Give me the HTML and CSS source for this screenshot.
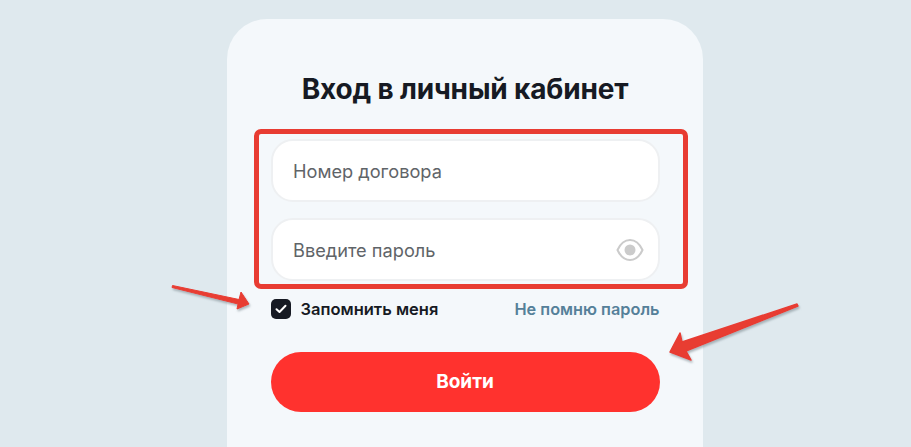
FILE: index.html
```html
<!DOCTYPE html>
<html lang="ru">
<head>
<meta charset="utf-8">
<title>Вход в личный кабинет</title>
<link rel="stylesheet" href="styles.css">
</head>
<body>
<main class="card">
  <h1 class="title">Вход в личный кабинет</h1>
  <div class="fields">
    <div class="field"><span class="placeholder">Номер договора</span></div>
    <div class="field"><span class="placeholder">Введите пароль</span>
      <svg class="eye" width="28" height="24" viewBox="0 0 28 24"><path d="M1.500 12C4.500 5.500 9 2 14 2S23.500 5.500 26.500 12C23.500 18.500 19 22 14 22S4.500 18.500 1.500 12Z" fill="none" stroke="#cbcbcb" stroke-width="2"/><circle cx="14" cy="12" r="5.500" fill="#cbcbcb"/></svg>
    </div>
  </div>
  <div class="options">
    <label class="remember">
      <span class="checkbox"><svg width="12" height="10" viewBox="0 0 12 10"><path d="M1.500 5.200L4.500 8L10.500 1.800" fill="none" stroke="#fff" stroke-width="2" stroke-linecap="round" stroke-linejoin="round"/></svg></span>
      Запомнить меня
    </label>
    <a class="forgot">Не помню пароль</a>
  </div>
  <button class="submit">Войти</button>
</main>
<div class="highlight"></div>
<svg class="arrows" width="911" height="447" viewBox="0 0 911 447">
  <defs><filter id="sh" x="-10%" y="-30%" width="120%" height="160%"><feDropShadow dx="1" dy="2" stdDeviation="0.800" flood-color="#7d8a90" flood-opacity="0.600"/></filter></defs>
  <path filter="url(#sh)" d="M172.500 285.500L239 299.500L241 292L249 304L237 309L238 304L172 287.500Z" fill="#e83c32" stroke="#e83c32" stroke-width="1" stroke-linejoin="round"/>
  <path filter="url(#sh)" d="M797 304L682 342L680 333L670 352L691 360L686 351L798 306Z" fill="#e83c32" stroke="#e83c32" stroke-width="1.500" stroke-linejoin="round"/>
</svg>
</body>
</html>
```
FILE: styles.css
```css
* { box-sizing: border-box; }
html, body { height: 100%; }
body {
  margin: 0;
  padding: 19px 0 0 227px;
  background: #dfe9ee;
  overflow: hidden;
  position: relative;
  font-family: Inter, "Liberation Sans", sans-serif;
  color: #161a23;
}
.card {
  width: 476px;
  height: 100%;
  padding: 52px 43.500px 0;
  background: #f4f8fb;
  border-radius: 40px 40px 0 0;
}
.title {
  margin: 0 0 31px;
  font-size: 28px;
  line-height: 37px;
  font-weight: 700;
  text-align: center;
  letter-spacing: -0.170px;
}
.fields { display: flex; flex-direction: column; gap: 16px; }
.field {
  height: 63px;
  padding: 0 14px 0 20.500px;
  display: flex;
  align-items: center;
  justify-content: space-between;
  background: #fff;
  border: 2px solid #eef0f2;
  border-radius: 22px;
}
.placeholder { font-size: 18.200px; color: #5f6468; }
.options {
  margin-top: 18px;
  display: flex;
  justify-content: space-between;
  align-items: center;
  height: 20px;
  font-size: 16.500px;
  font-weight: 600;
}
.remember { display: flex; align-items: center; gap: 10px; }
.checkbox {
  width: 20px;
  height: 20px;
  display: flex;
  align-items: center;
  justify-content: center;
  background: #161a23;
  border-radius: 5px;
}
.forgot { color: #558099; font-size: 16.300px; }
.submit {
  display: block;
  width: 100%;
  height: 60px;
  margin-top: 33px;
  padding: 0 0 2px;
  border: 0;
  border-radius: 30px;
  background: #ff322e;
  color: #fff;
  font: 700 19px Inter, "Liberation Sans", sans-serif;
}
.highlight {
  position: absolute;
  left: 254px;
  top: 129px;
  width: 434px;
  height: 160px;
  border: 5px solid #e83c32;
  border-radius: 7px;
}
.arrows { position: absolute; left: 0; top: 0; pointer-events: none; }
```
